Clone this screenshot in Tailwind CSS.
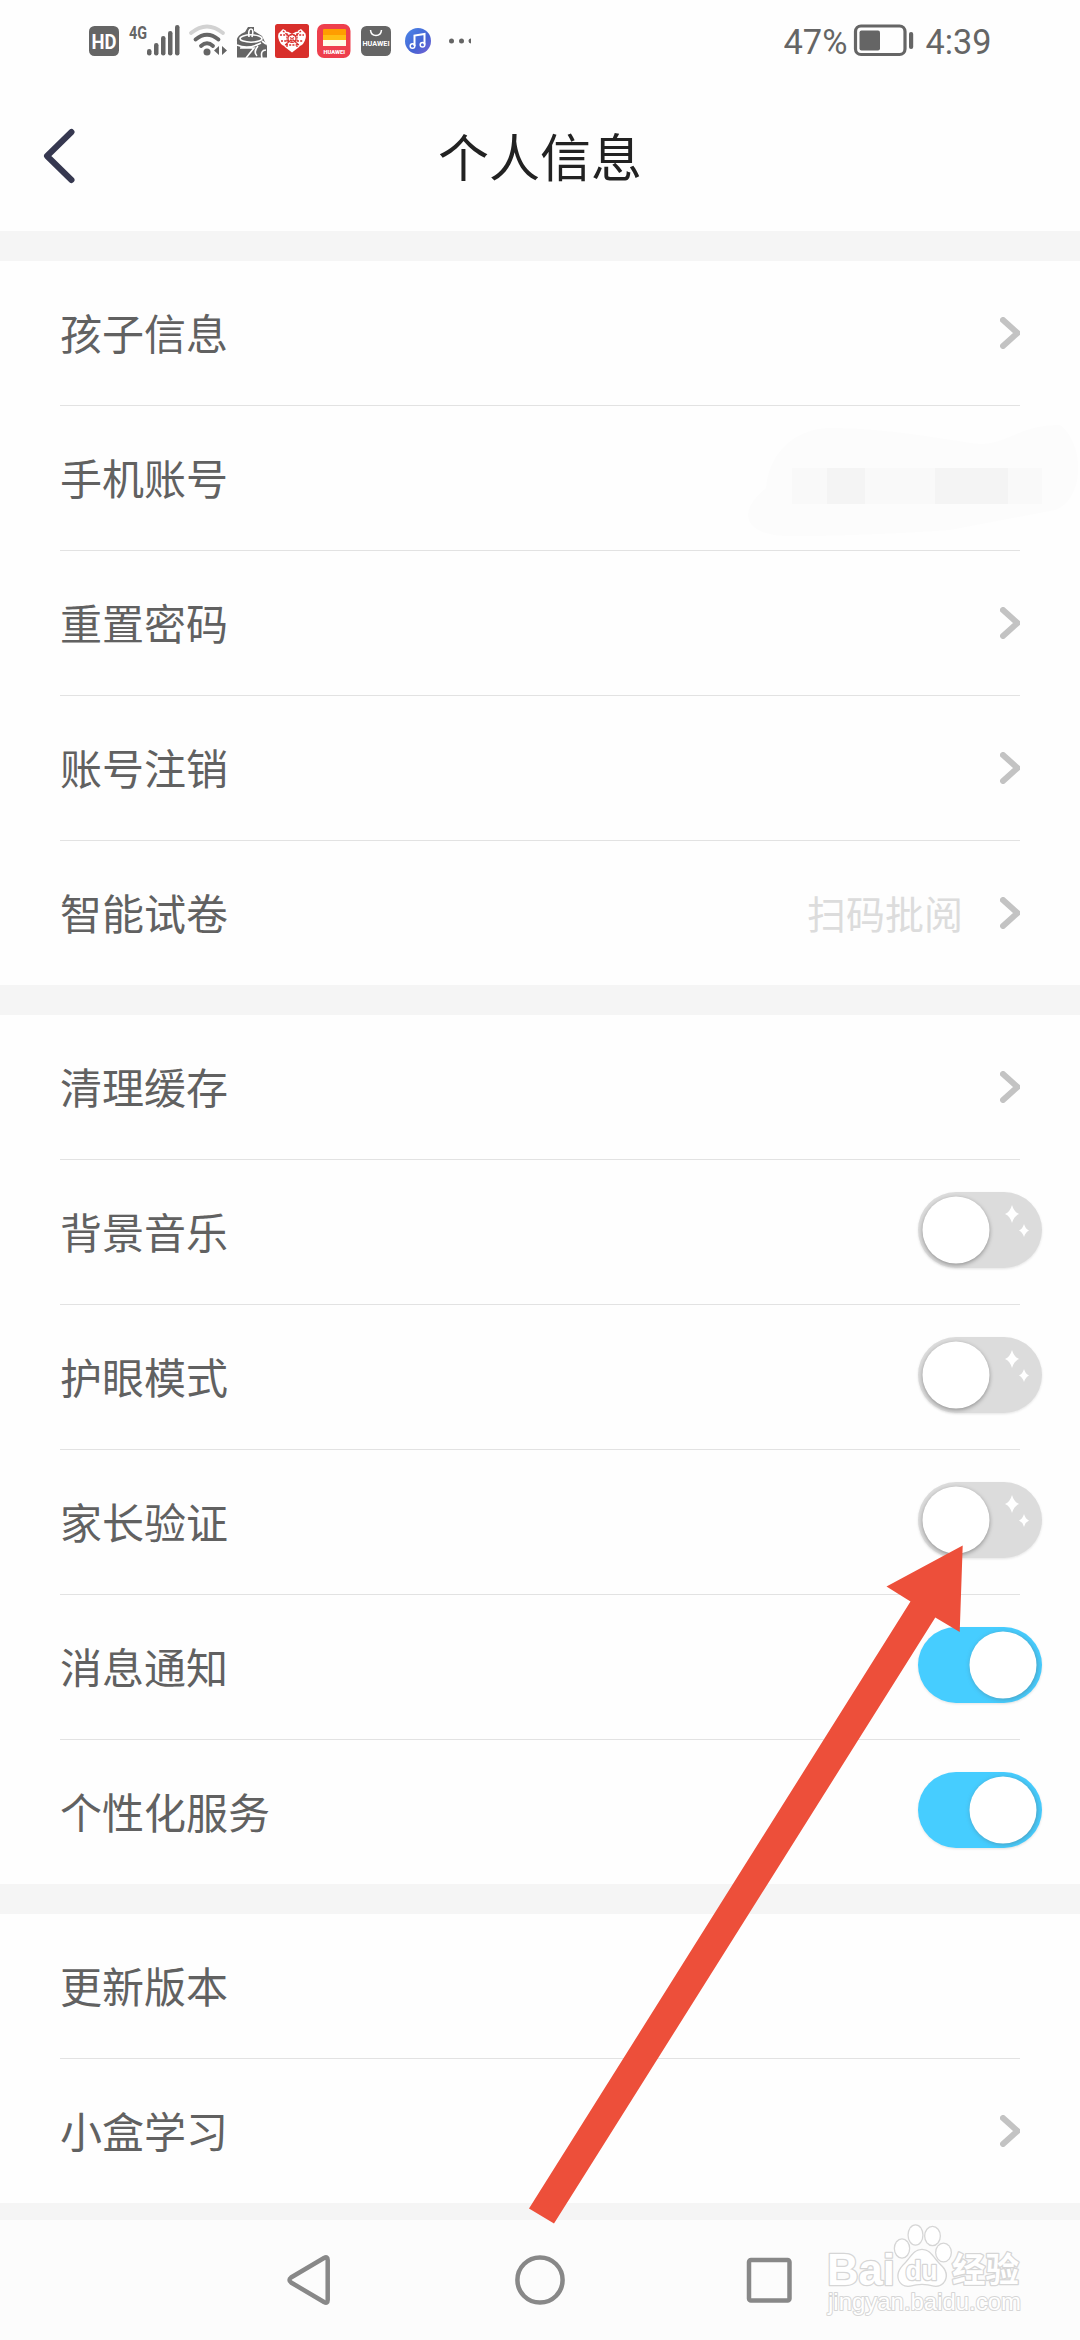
<!DOCTYPE html>
<html lang="zh-CN">
<head>
<meta charset="utf-8">
<title>个人信息</title>
<script src="https://cdn.jsdelivr.net/npm/@tailwindcss/browser@4"></script>
</head>
<body class="relative flex h-[2340px] w-[1080px] flex-col overflow-hidden bg-[#f5f5f5] font-['Noto_Sans_CJK_SC',sans-serif] text-[42px] text-[#616161]">

<svg class="absolute h-0 w-0">
  <symbol id="chev" viewBox="0 0 20 32"><path d="M3 3 17.500 16 3 29" fill="none" stroke="#c3c3c3" stroke-width="6" stroke-linecap="round" stroke-linejoin="round"/></symbol>
  <symbol id="off" viewBox="0 0 132 88">
    <rect x="4" y="2" width="124" height="76" rx="38" fill="#dcdcdc" filter="url(#soft)"/>
    <circle cx="42" cy="40" r="33.500" fill="#fff" filter="url(#knob)"/>
    <path d="M98 15Q100 22 105 24Q100 26 98 33Q96 26 91 24Q96 22 98 15ZM110 34Q111.500 39 115 40.500Q111.500 42 110 47Q108.500 42 105 40.500Q108.500 39 110 34Z" fill="#fff"/>
  </symbol>
  <symbol id="on" viewBox="0 0 132 88">
    <rect x="4" y="2" width="124" height="76" rx="38" fill="#46cdff" filter="url(#soft)"/>
    <circle cx="89" cy="40" r="33.500" fill="#fff" filter="url(#knobon)"/>
  </symbol>
  <filter id="soft" x="-10%" y="-10%" width="120%" height="130%" color-interpolation-filters="sRGB"><feDropShadow dx="0" dy="1" stdDeviation="1.200" flood-color="#000" flood-opacity=".1"/></filter>
  <filter id="knob" x="-20%" y="-20%" width="140%" height="140%" color-interpolation-filters="sRGB"><feDropShadow dx="0" dy="1.500" stdDeviation="2" flood-color="#000" flood-opacity=".35"/></filter>
  <filter id="knobon" x="-20%" y="-20%" width="140%" height="140%" color-interpolation-filters="sRGB"><feDropShadow dx="1" dy="1" stdDeviation="2.500" flood-color="#555" flood-opacity=".4"/></filter>
</svg>

<!-- status bar -->
<div class="flex h-[82px] shrink-0 items-start bg-[#fefefe]">
  <svg class="h-[82px] w-[784px] shrink-0" viewBox="0 0 784 82" fill="#656565">
    <rect x="89" y="26" width="30" height="30" rx="5.500"/>
    <text x="91.500" y="48.500" font-family="Roboto" font-weight="700" font-size="19.500" fill="#fff" textLength="25" lengthAdjust="spacingAndGlyphs">HD</text>
    <text x="129" y="38.500" font-family="Roboto" font-weight="700" font-size="19" textLength="18" lengthAdjust="spacingAndGlyphs">4G</text>
    <rect x="147" y="49" width="4.500" height="6.500" rx="2.200"/><rect x="154" y="43" width="4.500" height="12.500" rx="2.200"/><rect x="161" y="36" width="4.500" height="19.500" rx="2.200"/><rect x="168" y="31" width="4.500" height="24.500" rx="2.200"/><rect x="175" y="25" width="4.500" height="30.500" rx="2.200"/>
    <g fill="none" stroke-width="3.800" stroke-linecap="round">
      <path d="M191 33Q207 20 223 33" stroke="#d2d2d2"/>
      <path d="M195.500 39.500Q207 30 218.500 39.500M201 46Q207 40.500 213 46" stroke="#656565"/>
    </g>
    <circle cx="207" cy="52" r="3.500"/>
    <path d="M219 46v9l-5-4.500ZM222 46v9l5-4.500Z"/>
    <!-- drink can -->
    <path d="M237 41Q236 36 245 32L248 27H254V31L262 36 267 46V57.500H237Z"/>
    <g fill="none" stroke="#fff" stroke-width="1.600"><ellipse cx="251" cy="38.500" rx="11" ry="3.700"/><path d="M237 45Q248 50 261 43M246 58 254 48H240M257 56Q253 52 258 46M262 58Q260 50 266 50M249 37Q248 29 251 29T252 37M262 41 266 44"/></g>
    <rect x="275" y="24" width="34" height="34" rx="2.500" fill="#d82f2b"/>
    <path d="M292 52.500 281 44Q277 38 278.500 33.500L283 29 292 34 301 29 305.500 33.500Q307 38 303 44Z" fill="#fff"/>
    <path d="M280 35H304M281 41H303M287 30V47M297 30V47M283 31 301 47M301 31 283 47M286 45H298" fill="none" stroke="#d82f2b" stroke-width="1.300" stroke-dasharray="2 1.200"/>
    <circle cx="292" cy="38.500" r="4" fill="none" stroke="#d82f2b" stroke-width="1.200"/>
    <rect x="317" y="24" width="33.500" height="34" rx="7" fill="#ee3f4d"/>
    <rect x="323" y="29" width="23" height="7" rx="1" fill="#ff9d00"/><rect x="323" y="35" width="23" height="6" fill="#ffbd12"/><rect x="323" y="40" width="23" height="6" fill="#fffbe8"/>
    <text x="323.500" y="54" font-family="Roboto" font-weight="900" font-size="5.500" fill="#fff" textLength="21.500" lengthAdjust="spacingAndGlyphs">HUAWEI</text>
    <rect x="361" y="26" width="30" height="30" rx="5.500"/>
    <path d="M370.500 30Q371 35.500 376 35.500T381.500 30" fill="none" stroke="#fff" stroke-width="1.500"/>
    <text x="362.500" y="46" font-family="Roboto" font-weight="700" font-size="6.800" fill="#fff" textLength="27" lengthAdjust="spacingAndGlyphs">HUAWEI</text>
    <linearGradient id="mus" x1="0" y1="0" x2="1" y2="1"><stop offset="0" stop-color="#4a86e8"/><stop offset=".6" stop-color="#4663d3"/><stop offset="1" stop-color="#7a62d4"/></linearGradient>
    <circle cx="418" cy="41" r="13" fill="url(#mus)"/>
    <path d="M414.500 46V35.500L424.500 34V44.500" fill="none" stroke="#fff" stroke-width="2"/><circle cx="412.500" cy="46" r="2.300" fill="none" stroke="#fff" stroke-width="1.500"/><circle cx="422.500" cy="44.800" r="2.300" fill="none" stroke="#fff" stroke-width="1.500"/>
    <circle cx="451.500" cy="41" r="2.500"/><circle cx="461.500" cy="41" r="2.500"/><path d="M471 38.500a2.500 2.500 0 0 0 0 5Z"/>
  </svg>
  <svg class="h-[82px] w-[296px] shrink-0" viewBox="784 0 296 82" fill="#656565" font-family="Roboto" font-size="35">
    <text x="783.500" y="54" textLength="64" lengthAdjust="spacingAndGlyphs">47%</text>
    <rect x="855.500" y="26" width="49.500" height="28.500" rx="5.500" fill="none" stroke="#656565" stroke-width="3.200"/>
    <rect x="859.500" y="30.500" width="20.500" height="20" rx="2"/><rect x="909" y="32" width="4.200" height="17" rx="2"/>
    <text x="925.500" y="54" textLength="66" lengthAdjust="spacingAndGlyphs">4:39</text>
  </svg>
</div>

<!-- title bar -->
<header class="grid h-[149px] shrink-0 grid-cols-[1fr_auto_1fr] items-center bg-[#fefefe] pb-[1px] text-[51px] leading-none text-[#222]">
  <svg class="ml-[42px] h-[56px] w-[34px]" viewBox="0 0 34 56"><path d="M29.500 4 5 28 29.500 52" fill="none" stroke="#363850" stroke-width="6" stroke-linecap="round" stroke-linejoin="round"/></svg>
  <h1 class="-mt-px">个人信息</h1>
</header>

<main class="flex shrink-0 flex-col gap-[30px] pt-[30px] leading-none">
  <section class="divide-y divide-[#e2e2e2] bg-[#fefefe] px-[60px]">
    <div class="flex h-[145px] items-center justify-between"><span class="-mt-[2px]">孩子信息</span><svg class="h-8 w-5"><use href="#chev"/></svg></div>
    <div class="flex h-[145px] items-center justify-between"><span class="-mt-[2px]">手机账号</span>
      <svg class="-mr-[60px] h-[130px] w-[340px]" viewBox="0 -15 340 130">
        <path d="M26 60C28 30 50 0 92 0C150 0 205 12 240 16C270 15 280 -3 320 -3C345 15 345 72 315 82L210 102Q120 108 50 108C5 108-5 85 26 60Z" fill="#fcfcfc"/>
        <path d="M52 40H302V76H52Z" fill="#f9f9f9"/><path d="M87 40H125V76H87ZM195 40H268V76H195Z" fill="#f4f4f4"/>
      </svg>
    </div>
    <div class="flex h-[145px] items-center justify-between"><span class="-mt-[2px]">重置密码</span><svg class="h-8 w-5"><use href="#chev"/></svg></div>
    <div class="flex h-[145px] items-center justify-between"><span class="-mt-[2px]">账号注销</span><svg class="h-8 w-5"><use href="#chev"/></svg></div>
    <div class="flex h-[144px] items-center"><span class="-mt-[2px] flex-1">智能试卷</span><span class="-mt-[2px] mr-[37px] text-[39px] text-[#dcdcdc]">扫码批阅</span><svg class="h-8 w-5"><use href="#chev"/></svg></div>
  </section>

  <section class="divide-y divide-[#e2e2e2] bg-[#fefefe] px-[60px]">
    <div class="flex h-[145px] items-center justify-between"><span class="-mt-[2px]">清理缓存</span><svg class="h-8 w-5"><use href="#chev"/></svg></div>
    <div class="flex h-[145px] items-center justify-between"><span class="-mt-[2px]">背景音乐</span><svg class="mt-1 -mr-[26px] h-[88px] w-[132px]"><use href="#off"/></svg></div>
    <div class="flex h-[145px] items-center justify-between"><span class="-mt-[2px]">护眼模式</span><svg class="mt-1 -mr-[26px] h-[88px] w-[132px]"><use href="#off"/></svg></div>
    <div class="flex h-[145px] items-center justify-between"><span class="-mt-[2px]">家长验证</span><svg class="mt-1 -mr-[26px] h-[88px] w-[132px]"><use href="#off"/></svg></div>
    <div class="flex h-[145px] items-center justify-between"><span class="-mt-[2px]">消息通知</span><svg class="mt-1 -mr-[26px] h-[88px] w-[132px]"><use href="#on"/></svg></div>
    <div class="flex h-[144px] items-center justify-between"><span class="-mt-[2px]">个性化服务</span><svg class="mt-1 -mr-[26px] h-[88px] w-[132px]"><use href="#on"/></svg></div>
  </section>

  <section class="divide-y divide-[#e2e2e2] bg-[#fefefe] px-[60px]">
    <div class="flex h-[145px] items-center"><span class="-mt-[2px]">更新版本</span></div>
    <div class="flex h-[144px] items-center justify-between"><span class="-mt-[2px]">小盒学习</span><svg class="h-8 w-5"><use href="#chev"/></svg></div>
  </section>
</main>

<!-- system navigation -->
<nav class="mt-auto h-[120px] shrink-0 bg-[#fcfcfc]">
  <svg class="h-[120px] w-[1080px]" viewBox="0 2220 1080 120">
    <g fill="none" stroke="#888" stroke-width="4.500" stroke-linejoin="round">
      <path d="M289.500 2280Q289.500 2278.500 291 2277.500L324 2258Q327.700 2256 327.700 2260V2300Q327.700 2304 324 2302L291 2282.500Q289.500 2281.500 289.500 2280Z"/>
      <circle cx="540" cy="2280" r="22.600"/>
      <rect x="749" y="2260" width="40.500" height="40.500" rx="2"/>
    </g>
    <g fill="#fff" stroke="#d6d6d6" stroke-width="2.600" paint-order="stroke" stroke-linejoin="round">
      <text x="827" y="2285" font-family="Liberation Sans" font-weight="700" font-size="45" textLength="68" lengthAdjust="spacingAndGlyphs">Bai</text>
      <ellipse cx="902" cy="2248.500" rx="7" ry="9"/><ellipse cx="915.500" cy="2235" rx="6.800" ry="9.500"/><ellipse cx="932.500" cy="2236" rx="7.200" ry="9"/><ellipse cx="943.500" cy="2252.500" rx="7.200" ry="8.800"/>
      <path d="M922 2250C931 2250 933 2259 941 2266C951 2276 943 2287 934 2285.500Q922 2282 910 2285.500C900 2287 894 2276 903 2266C911 2259 913 2250 922 2250Z"/>
      <text x="905.500" y="2280" font-family="Liberation Sans" font-weight="700" font-size="28" textLength="32" lengthAdjust="spacingAndGlyphs">du</text>
      <text x="952" y="2282" font-family="Noto Sans CJK SC" font-weight="700" font-size="34" textLength="67" lengthAdjust="spacingAndGlyphs">经验</text>
      <text x="828" y="2310" font-family="Liberation Sans" font-size="24" stroke-width="2" textLength="193" lengthAdjust="spacingAndGlyphs">jingyan.baidu.com</text>
    </g>
  </svg>
</nav>

<!-- pointer arrow laid over the list -->
<svg class="pointer-events-none absolute inset-0 h-[2340px] w-[1080px]" viewBox="0 0 1080 2340"><path d="M962.700 1545.500 886.500 1586.500 910.500 1601.500 529 2208.500 554 2223.500 935.300 1617.500 959.700 1632Z" fill="#ed4f3a"/></svg>
</body>
</html>
